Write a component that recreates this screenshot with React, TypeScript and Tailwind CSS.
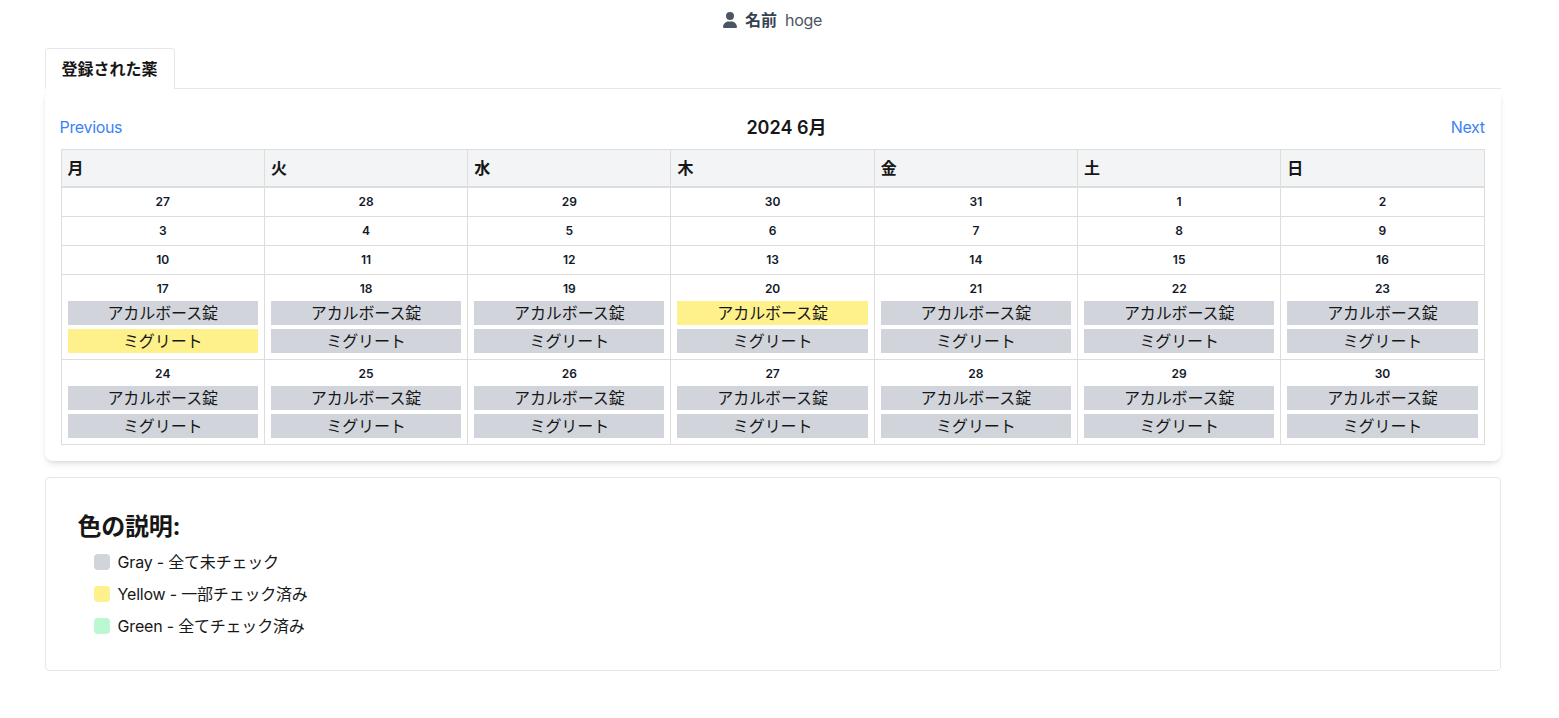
const weekdays = ['月', '火', '水', '木', '金', '土', '日'];

type Medicine = { name: string; partial: boolean };
type Day = { date: number; medicines: Medicine[] };

const plainDays = [27, 28, 29, 30, 31, 1, 2, 3, 4, 5, 6, 7, 8, 9, 10, 11, 12, 13, 14, 15, 16];
const doseDays = [17, 18, 19, 20, 21, 22, 23, 24, 25, 26, 27, 28, 29, 30];

const days: Day[] = [
  ...plainDays.map((date) => ({ date, medicines: [] })),
  ...doseDays.map((date) => ({
    date,
    medicines: [
      { name: 'アカルボース錠', partial: date === 20 },
      { name: 'ミグリート', partial: date === 17 },
    ],
  })),
];

const legend = [
  { color: 'bg-[#d1d5db]', label: 'Gray - 全て未チェック' },
  { color: 'bg-[#fef08a]', label: 'Yellow - 一部チェック済み' },
  { color: 'bg-[#bbf7d0]', label: 'Green - 全てチェック済み' },
];

function UserHeader() {
  return (
    <header className="flex h-10 items-center justify-center text-[#4b5563]">
      <svg className="h-4 w-3.5" viewBox="0 0 448 512" fill="currentColor" aria-hidden="true">
        <path d="M224 256A128 128 0 1 0 224 0a128 128 0 1 0 0 256zm-45.7 48C79.8 304 0 383.8 0 482.3C0 498.7 13.3 512 29.7 512H418.3c16.4 0 29.7-13.3 29.7-29.7C448 383.8 368.2 304 269.7 304H178.3z" />
      </svg>
      <span className="ml-2 font-bold text-[#374151]">名前</span>
      <span className="ml-2 tracking-[-0.3px]">hoge</span>
    </header>
  );
}

function DayCell({ day }: { day: Day }) {
  return (
    <div className="min-w-0 border-r border-b border-[#dddddd] p-1.5 text-center">
      <div className="text-xs leading-4 font-semibold text-[#111827]">{day.date}</div>
      {day.medicines.length > 0 && (
        <div className="mt-1 flex flex-col gap-1 tracking-[-0.1px]">
          {day.medicines.map((m) => (
            <div key={m.name} className={`h-6 leading-6 ${m.partial ? 'bg-[#fef08a]' : 'bg-[#d1d5db]'}`}>
              {m.name}
            </div>
          ))}
        </div>
      )}
    </div>
  );
}

function Calendar() {
  return (
    <section className="h-[372px] rounded-lg px-4 pt-6 shadow-md">
      <div className="flex h-7 items-center justify-between">
        <button className="-ml-px tracking-[-0.35px] text-[#3b82f6]">Previous</button>
        <h2 className="pt-px text-lg leading-7 font-semibold">2024 6月</h2>
        <button className="tracking-[-0.35px] text-[#3b82f6]">Next</button>
      </div>
      <div className="mt-2 border-t border-l border-[#dddddd]">
        <div className="grid h-[37px] grid-cols-7 border-b border-[#dddddd] bg-[#f3f4f6]">
          {weekdays.map((w) => (
            <div key={w} className="border-r border-[#dddddd] px-1.5 leading-9 font-bold">
              {w}
            </div>
          ))}
        </div>
        <div className="grid grid-cols-7 border-t border-[#dddddd]">
          {days.map((day, i) => (
            <DayCell key={i} day={day} />
          ))}
        </div>
      </div>
    </section>
  );
}

function Legend() {
  return (
    <section className="mt-4 h-[194px] rounded border border-[#e5e7eb] px-8 pt-[33px]">
      <h2 className="text-2xl leading-8 font-bold tracking-[-0.3px]">色の説明:</h2>
      <ul className="mt-[7px] ml-4 flex flex-col gap-2">
        {legend.map((item) => (
          <li key={item.label} className="flex h-6 items-center">
            <span className={`mr-2 size-4 rounded ${item.color}`} />
            <span className="leading-6 tracking-[-0.2px]">{item.label}</span>
          </li>
        ))}
      </ul>
    </section>
  );
}

export default function App() {
  return (
    <div className="h-[718px] overflow-hidden bg-white font-['Inter','Noto_Sans_CJK_JP',sans-serif] text-base leading-6 text-[#171717]">
      <div className="ml-[44.6px] w-[1456px]">
        <UserHeader />
        <nav className="mt-2 flex h-[41px]">
          <button className="w-[130px] rounded-t border border-b-0 border-[#e5e7eb] font-semibold">登録された薬</button>
          <div className="grow border-b border-[#e5e7eb]" />
        </nav>
        <Calendar />
        <Legend />
      </div>
    </div>
  );
}
